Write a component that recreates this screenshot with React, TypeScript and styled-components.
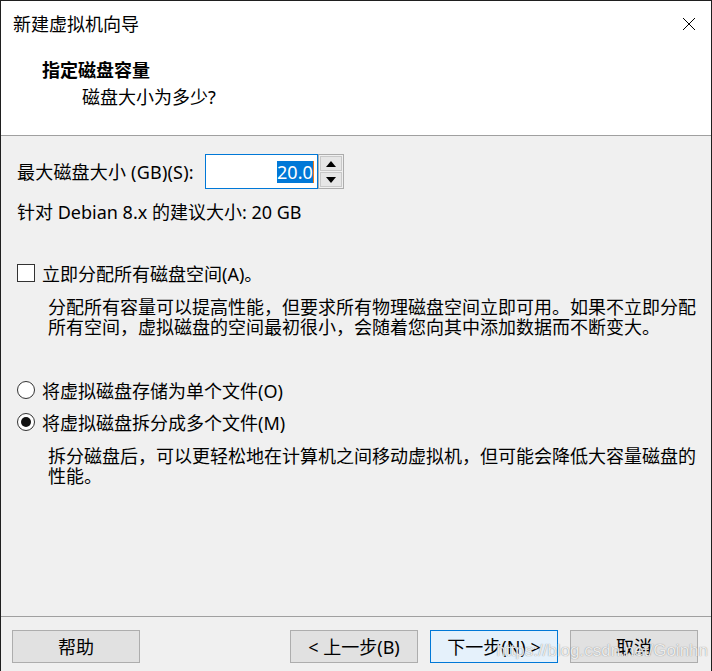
import styled, {createGlobalStyle} from 'styled-components'

const GlobalStyle = createGlobalStyle`
  html, body {
    margin: 0;
    padding: 0;
    background: #f0f0f0;
  }
  body {
    font-family: "Noto Sans", "Noto Sans CJK SC", sans-serif;
    font-size: 18px;
    color: #000;
  }
`

const Window = styled.div`
  position: relative;
  width: 712px;
  height: 671px;
  box-sizing: border-box;
  border: 1px solid #1f1f1f;
  border-bottom: none;
  display: flex;
  flex-direction: column;
  background: #f0f0f0;
  overflow: hidden;
`

const Header = styled.div`
  background: #fff;
  height: 134px;
  border-bottom: 1px solid #a0a0a0;
  flex-shrink: 0;
`

const TitleBar = styled.div`
  height: 46px;
  display: flex;
  align-items: center;
  justify-content: space-between;
  padding: 0 15px 0 12px;
`

const Title = styled.div`
  line-height: 22px;
`

const CloseButton = styled.div`
  width: 14px;
  height: 14px;
  display: flex;
`

const Heading = styled.div`
  margin: 12px 0 0 41px;
  font-weight: bold;
  line-height: 22px;
`

const SubHeading = styled.div`
  margin: 5px 0 0 81px;
  line-height: 22px;
`

const Body = styled.div`
  flex: 1;
  padding: 18px 12px 0 16px;
`

const SizeRow = styled.div`
  display: flex;
  align-items: center;
  height: 35px;
`

const SizeLabel = styled.span`
  line-height: 22px;
  letter-spacing: 0.2px;
`

const SpinInput = styled.div`
  display: flex;
  margin-left: 11px;
  height: 35px;
`

const InputBox = styled.div`
  width: 113px;
  box-sizing: border-box;
  border: 1px solid #0078d7;
  background: #fff;
  display: flex;
  align-items: center;
  justify-content: flex-end;
  padding-right: 3px;
`

const Selected = styled.span`
  background: #0078d7;
  color: #fff;
  line-height: 22px;
  height: 22px;
`

const Caret = styled.span`
  width: 1px;
  height: 22px;
  background: #f07a1a;
`

const SpinButtons = styled.div`
  width: 26px;
  box-sizing: border-box;
  border: 1px solid #acacac;
  display: flex;
  flex-direction: column;
  gap: 1px;
  padding: 1px;
  background: #f0f0f0;
`

const SpinButton = styled.div`
  flex: 1;
  background: #e6e6e6;
  border: 1px solid #c8c8c8;
  display: flex;
  align-items: center;
  justify-content: center;
`

const Text = styled.div<{$mt?: number}>`
  margin-top: ${(p) => p.$mt ?? 0}px;
  line-height: 21px;
`

const OptionRow = styled.label<{$mt: number}>`
  display: flex;
  align-items: center;
  gap: 7px;
  height: 20px;
  margin-top: ${(p) => p.$mt}px;
`

const CheckBox = styled.span`
  width: 18px;
  height: 18px;
  box-sizing: border-box;
  border: 1px solid #333;
  background: #fff;
`

const Radio = styled.span<{$checked?: boolean}>`
  width: 18px;
  height: 18px;
  box-sizing: border-box;
  border: 1px solid #333;
  border-radius: 50%;
  background: #fff;
  display: flex;
  align-items: center;
  justify-content: center;
  &::after {
    content: '';
    display: ${(p) => (p.$checked ? 'block' : 'none')};
    width: 10px;
    height: 10px;
    border-radius: 50%;
    background: #111;
  }
`

const Hint = styled.p<{$mt: number}>`
  margin: ${(p) => p.$mt}px 0 0 31px;
  line-height: 20px;
`

const Footer = styled.div`
  height: 55px;
  border-top: 1px solid #a0a0a0;
  display: flex;
  padding: 13px 13px 0 11px;
  box-sizing: border-box;
  flex-shrink: 0;
`

const ButtonGroup = styled.div`
  margin-left: auto;
  display: flex;
  gap: 12px;
`

const Button = styled.button<{$default?: boolean}>`
  width: 128px;
  height: 33px;
  box-sizing: border-box;
  border: 1px solid ${(p) => (p.$default ? '#0078d7' : '#adadad')};
  background: ${(p) => (p.$default ? '#e5f1fb' : '#e1e1e1')};
  font-family: inherit;
  font-size: 18px;
  color: #000;
  padding: 0;
  line-height: 22px;
`

const Watermark = styled.div`
  position: absolute;
  right: 3px;
  bottom: 10px;
  font-family: "Liberation Sans", Arial, sans-serif;
  font-size: 17px;
  color: rgba(255, 255, 255, 0.85);
  text-shadow: 0 0 1px rgba(90, 90, 90, 0.8);
  pointer-events: none;
`

export default function App() {
  return (
    <>
      <GlobalStyle />
      <Window>
        <Header>
          <TitleBar>
            <Title>新建虚拟机向导</Title>
            <CloseButton>
              <svg width="14" height="14" viewBox="0 0 14 14">
                <path d="M1 1 L13 13 M13 1 L1 13" stroke="#000" strokeWidth="1" fill="none" />
              </svg>
            </CloseButton>
          </TitleBar>
          <Heading>指定磁盘容量</Heading>
          <SubHeading>磁盘大小为多少?</SubHeading>
        </Header>
        <Body>
          <SizeRow>
            <SizeLabel>最大磁盘大小 (GB)(S):</SizeLabel>
            <SpinInput>
              <InputBox>
                <Selected>20.0</Selected>
                <Caret />
              </InputBox>
              <SpinButtons>
                <SpinButton>
                  <svg width="10" height="6" viewBox="0 0 10 6">
                    <path d="M0 6 L5 0 L10 6 Z" fill="#000" />
                  </svg>
                </SpinButton>
                <SpinButton>
                  <svg width="10" height="6" viewBox="0 0 10 6">
                    <path d="M0 0 L10 0 L5 6 Z" fill="#000" />
                  </svg>
                </SpinButton>
              </SpinButtons>
            </SpinInput>
          </SizeRow>
          <Text $mt={13}>针对 Debian 8.x 的建议大小: 20 GB</Text>

          <OptionRow $mt={40}>
            <CheckBox />
            <span>立即分配所有磁盘空间(A)。</span>
          </OptionRow>
          <Hint $mt={14}>
            分配所有容量可以提高性能，但要求所有物理磁盘空间立即可用。如果不立即分配
            <br />
            所有空间，虚拟磁盘的空间最初很小，会随着您向其中添加数据而不断变大。
          </Hint>

          <OptionRow $mt={43}>
            <Radio />
            <span>将虚拟磁盘存储为单个文件(O)</span>
          </OptionRow>
          <OptionRow $mt={12}>
            <Radio $checked />
            <span>将虚拟磁盘拆分成多个文件(M)</span>
          </OptionRow>
          <Hint $mt={14}>
            拆分磁盘后，可以更轻松地在计算机之间移动虚拟机，但可能会降低大容量磁盘的
            <br />
            性能。
          </Hint>
        </Body>
        <Footer>
          <Button>帮助</Button>
          <ButtonGroup>
            <Button>&lt; 上一步(B)</Button>
            <Button $default>下一步(N) &gt;</Button>
            <Button>取消</Button>
          </ButtonGroup>
        </Footer>
        <Watermark>https://blog.csdn.net/Goinhn</Watermark>
      </Window>
    </>
  )
}
